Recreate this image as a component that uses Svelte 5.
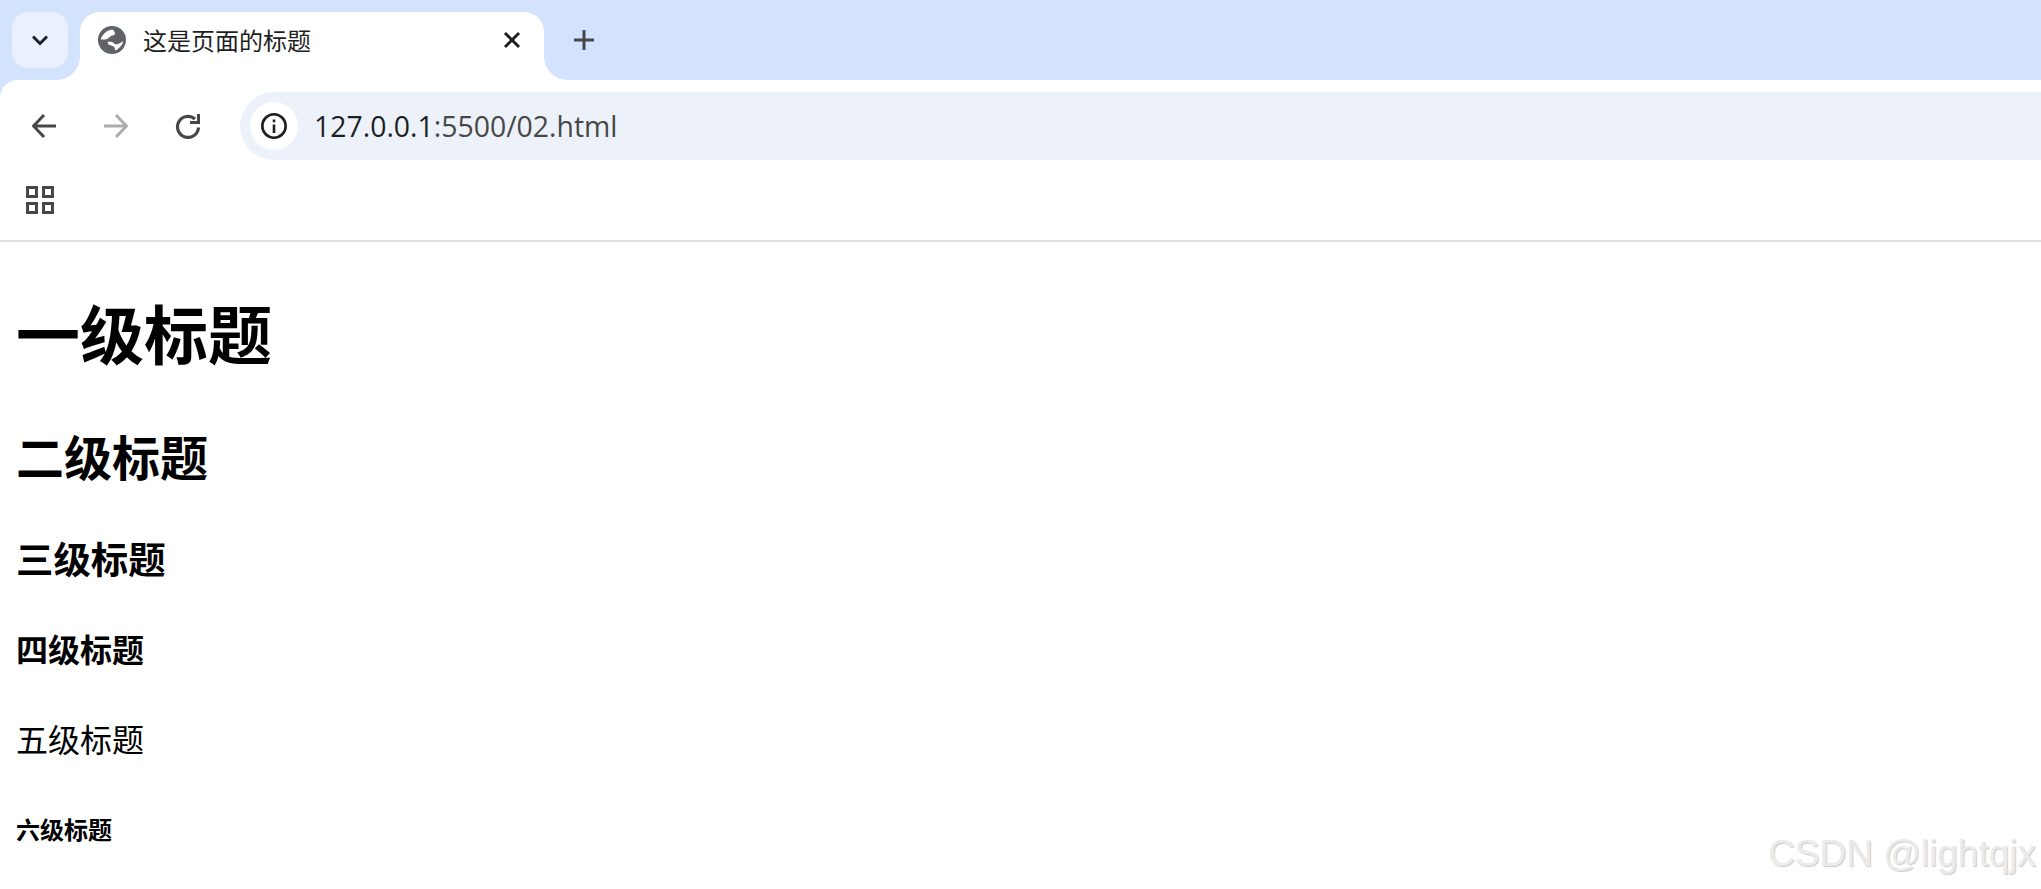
<script>
  const headings = [
    { tag: 'h1', text: '一级标题' },
    { tag: 'h2', text: '二级标题' },
    { tag: 'h3', text: '三级标题' },
    { tag: 'h4', text: '四级标题' },
    { tag: 'h5', text: '五级标题' },
    { tag: 'h6', text: '六级标题' }
  ];
</script>

<div class="browser">
  <header class="chrome">
    <div class="tabstrip">
      <button class="tabsearch" aria-label="搜索标签页">
        <svg width="20" height="20" viewBox="0 0 20 20"><path d="M3 6.500 10 13.500 17 6.500" fill="none" stroke="#1f1f1f" stroke-width="3"/></svg>
      </button>
      <div class="tab">
        <svg class="globe" width="28" height="28" viewBox="0 0 28 28">
          <circle cx="14" cy="14" r="14" fill="#5f6368"/>
          <path d="M14 3.500C10.500 4 7 6 5 9c-1.200 1.500-2 3-2.300 4.300 2.300.5 4.500.4 6.300-.3 1.500-.6 2.300-2 3.500-2.700 1.400-.7 3-.7 4-1.500 .7-.9.500-2.300-.2-3.400-.6-1-1.400-1.700-2.300-1.900Z" fill="#fff"/>
          <path d="M9.500 16c1.500-.5 3.200-.5 4.500 0 1.300.5 2 1.700 3.300 2.200 2.600.5 5.400-1.300 7.800-3-.2 1.800-1 3.400-2.200 4.800-1.500 1.900-3.400 3.400-5.600 4.600-.3-1.400-.2-2.800-1.600-4-1.400-1.200-3.200-1-4.600-1.600-.8-.8-1.400-1.900-1.600-3Z" fill="#fff"/>
        </svg>
        <span class="title">这是页面的标题</span>
        <svg class="close" width="20" height="20" viewBox="0 0 20 20"><path d="M3 3l14 14M17 3 3 17" stroke="#1f1f1f" stroke-width="3"/></svg>
      </div>
      <button class="newtab" aria-label="新标签页">
        <svg width="22" height="22" viewBox="0 0 22 22"><path d="M11 1v20M1 11h20" stroke="#474747" stroke-width="3"/></svg>
      </button>
    </div>

    <div class="toolbar">
      <span class="navicon">
        <svg width="24" height="24" viewBox="0 0 24 24"><path d="M24 12H3M12 1 1.500 12 12 23" fill="none" stroke="#474747" stroke-width="3"/></svg>
      </span>
      <span class="navicon">
        <svg width="24" height="24" viewBox="0 0 24 24"><path d="M0 12h21M12 1l10.500 11L12 23" fill="none" stroke="#adadad" stroke-width="3"/></svg>
      </span>
      <span class="navicon">
        <svg width="26" height="26" viewBox="0 0 26 26"><path d="M23.500 14.500A10.500 10.500 0 1 1 20 6" fill="none" stroke="#474747" stroke-width="3.200"/><path d="M25 1v10H15V8h7V1Z" fill="#474747"/></svg>
      </span>
      <div class="omnibox">
        <span class="chip">
          <svg width="26" height="26" viewBox="0 0 26 26"><circle cx="13" cy="13" r="11.700" fill="none" stroke="#1f1f1f" stroke-width="2.600"/><path d="M13 11.500V20" stroke="#1f1f1f" stroke-width="2.600"/><rect x="11.700" y="6.500" width="2.600" height="2.800" fill="#1f1f1f"/></svg>
        </span>
        <span class="url"><span class="host">127.0.0.1</span>:5500/02.html</span>
      </div>
    </div>

    <div class="bookmarks">
      <svg width="28" height="28" viewBox="0 0 28 28">
        <path fill-rule="evenodd" fill="#474747" d="M0 0h12v12H0ZM3 3v6h6V3ZM16 0h12v12H16ZM19 3v6h6V3ZM0 16h12v12H0ZM3 19v6h6v-6ZM16 16h12v12H16ZM19 19v6h6v-6Z"/>
      </svg>
    </div>
  </header>

  <main class="page">
    {#each headings as h}
      <svelte:element this={h.tag}>{h.text}</svelte:element>
    {/each}
  </main>

  <div class="watermark">CSDN @lightqjx</div>
</div>

<style>
  :global(body) {
    margin: 0;
    background: #fff;
  }
  .browser {
    position: relative;
    width: 2041px;
    height: 889px;
    overflow: hidden;
    background: #fff;
    font-family: "Noto Sans CJK SC", sans-serif;
  }
  .chrome {
    background: #d3e3fd;
  }
  .tabstrip {
    display: flex;
    height: 80px;
    box-sizing: border-box;
    padding: 12px 0 0 12px;
  }
  .tabsearch {
    position: relative;
    z-index: 1;
    width: 56px;
    height: 56px;
    margin-right: 12px;
    padding: 0;
    border: 0;
    border-radius: 16px;
    background: #e9f1fe;
    display: flex;
    align-items: center;
    justify-content: center;
  }
  .tab {
    position: relative;
    width: 464px;
    height: 68px;
    box-sizing: border-box;
    display: flex;
    align-items: flex-start;
    padding: 14px 22px 0 18px;
    background: #fff;
    border-radius: 20px 20px 0 0;
  }
  .tab::before,
  .tab::after {
    content: "";
    position: absolute;
    bottom: 0;
    width: 24px;
    height: 24px;
  }
  .tab::before {
    left: -24px;
    background: radial-gradient(circle at 0 0, #d3e3fd 23.500px, #fff 24.500px);
  }
  .tab::after {
    right: -24px;
    background: radial-gradient(circle at 100% 0, #d3e3fd 23.500px, #fff 24.500px);
  }
  .globe {
    flex: none;
  }
  .title {
    margin-left: 17px;
    flex: 1;
    font-size: 24px;
    line-height: 28px;
    color: #1f1f1f;
  }
  .close {
    flex: none;
    margin-top: 4px;
  }
  .newtab {
    width: 40px;
    height: 40px;
    margin: 8px 0 0 20px;
    padding: 0;
    border: 0;
    background: transparent;
    display: flex;
    align-items: center;
    justify-content: center;
  }
  .toolbar {
    height: 96px;
    box-sizing: border-box;
    display: flex;
    align-items: flex-start;
    padding: 12px 0 0 14px;
    background: #fff;
    border-radius: 18px 0 0 0;
  }
  .navicon {
    width: 60px;
    height: 68px;
    margin-right: 12px;
    display: flex;
    align-items: center;
    justify-content: center;
  }
  .navicon:nth-child(3) {
    margin-right: 0;
  }
  .omnibox {
    flex: 1;
    height: 68px;
    margin-left: 22px;
    display: flex;
    align-items: center;
    padding-left: 10px;
    background: #edf2fa;
    border-radius: 34px 0 0 34px;
  }
  .chip {
    width: 48px;
    height: 48px;
    flex: none;
    border-radius: 50%;
    background: #fff;
    display: flex;
    align-items: center;
    justify-content: center;
  }
  .url {
    margin-left: 16px;
    font-family: "Open Sans", sans-serif;
    font-size: 28.400px;
    color: #474747;
  }
  .host {
    color: #1f1f1f;
  }
  .bookmarks {
    height: 66px;
    box-sizing: border-box;
    padding: 10px 0 0 26px;
    background: #fff;
    border-bottom: 2px solid #e1e1e1;
  }
  .page {
    padding: 0 16px;
    color: #000;
  }
  h1, h2, h3, h4, h5, h6 {
    margin: 0;
    line-height: 1.3;
  }
  h1 { font-size: 64px; font-weight: 700; margin-top: 48px; }
  h2 { font-size: 48px; font-weight: 700; margin-top: 51px; }
  h3 { font-size: 37.440px; font-weight: 700; margin-top: 47px; }
  h4 { font-size: 32px; font-weight: 700; margin-top: 46px; }
  h5 { font-size: 32px; font-weight: 400; margin-top: 48px; }
  h6 { font-size: 24px; font-weight: 700; margin-top: 54px; }
  .watermark {
    position: absolute;
    right: 5px;
    bottom: 12px;
    font-family: "Liberation Sans", sans-serif;
    font-size: 37px;
    line-height: 46px;
    color: #ebebeb;
    text-shadow: 1px 1px 1px #cacaca;
  }
</style>
